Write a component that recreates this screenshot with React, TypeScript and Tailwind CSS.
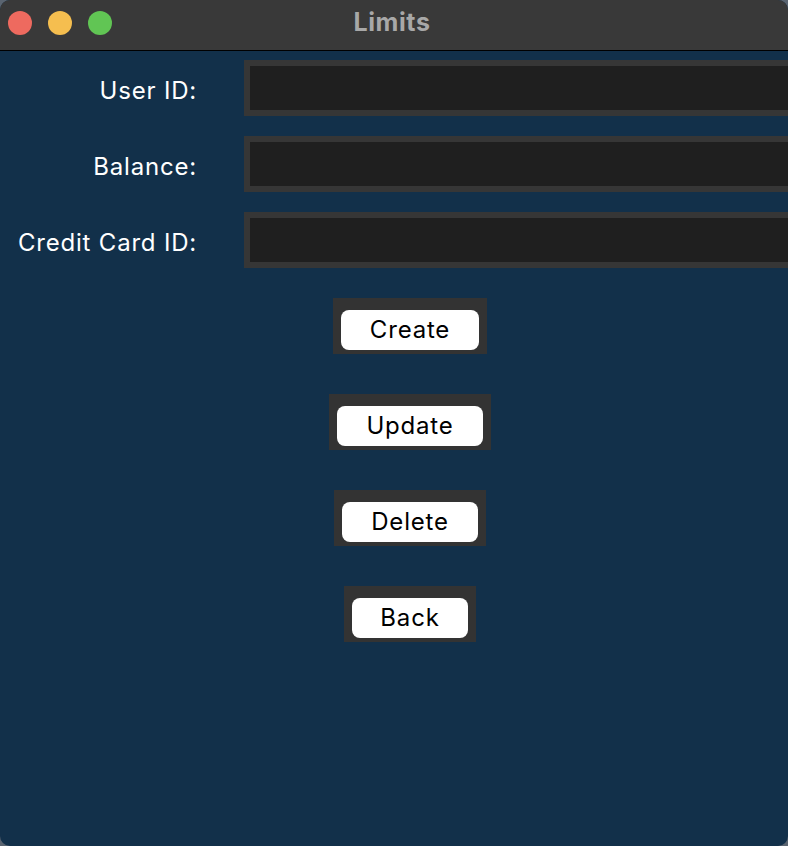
const Field = ({label}: {label: string}) => (
    <div className="flex items-center h-[56px]">
        <div className="w-[244px] shrink-0 pr-[47px] text-right text-[24px] tracking-[0.8px] text-white leading-none pt-[6px]">
            {label}
        </div>
        <div className="flex-1 h-full border-[6px] border-r-0 border-[#363636] bg-[#1f1f1f]"></div>
    </div>
)

const Button = ({label, width}: {label: string, width: string}) => (
    <div className="bg-[#333333] px-[8px] pt-[12px] pb-[4px]">
        <div className={`${width} h-[40px] rounded-[8px] bg-white flex items-center justify-center text-[24px] tracking-[0.8px] text-black leading-none`}>
            {label}
        </div>
    </div>
)

export default function App() {
    return (
        <div className="w-[788px] h-[846px] bg-[#5a6470]" style={{fontFamily: 'Inter, "Noto Sans", sans-serif'}}>
            <div className="w-full h-full rounded-[10px] overflow-hidden flex flex-col bg-[#12304a]">
                <div className="relative h-[51px] shrink-0 bg-[#393939] border-b border-black flex items-center">
                    <div className="flex gap-[16px] pl-[8px] pb-[5px]">
                        <div className="w-[24px] h-[24px] rounded-full bg-[#ee6a5f]"></div>
                        <div className="w-[24px] h-[24px] rounded-full bg-[#f5be4f]"></div>
                        <div className="w-[24px] h-[24px] rounded-full bg-[#61c554]"></div>
                    </div>
                    <div className="absolute left-0 right-0 top-[4px] text-center text-[25px] tracking-[0.6px] font-bold text-[#a8a8a8] pr-[4px]">
                        Limits
                    </div>
                </div>
                <div className="flex flex-col pt-[9px]">
                    <div className="flex flex-col gap-[20px]">
                        <Field label="User ID:"/>
                        <Field label="Balance:"/>
                        <Field label="Credit Card ID:"/>
                    </div>
                    <div className="flex flex-col items-center gap-[40px] pt-[30px] pl-[32px]">
                        <Button label="Create" width="w-[138px]"/>
                        <Button label="Update" width="w-[146px]"/>
                        <Button label="Delete" width="w-[136px]"/>
                        <Button label="Back" width="w-[116px]"/>
                    </div>
                </div>
            </div>
        </div>
    )
}
